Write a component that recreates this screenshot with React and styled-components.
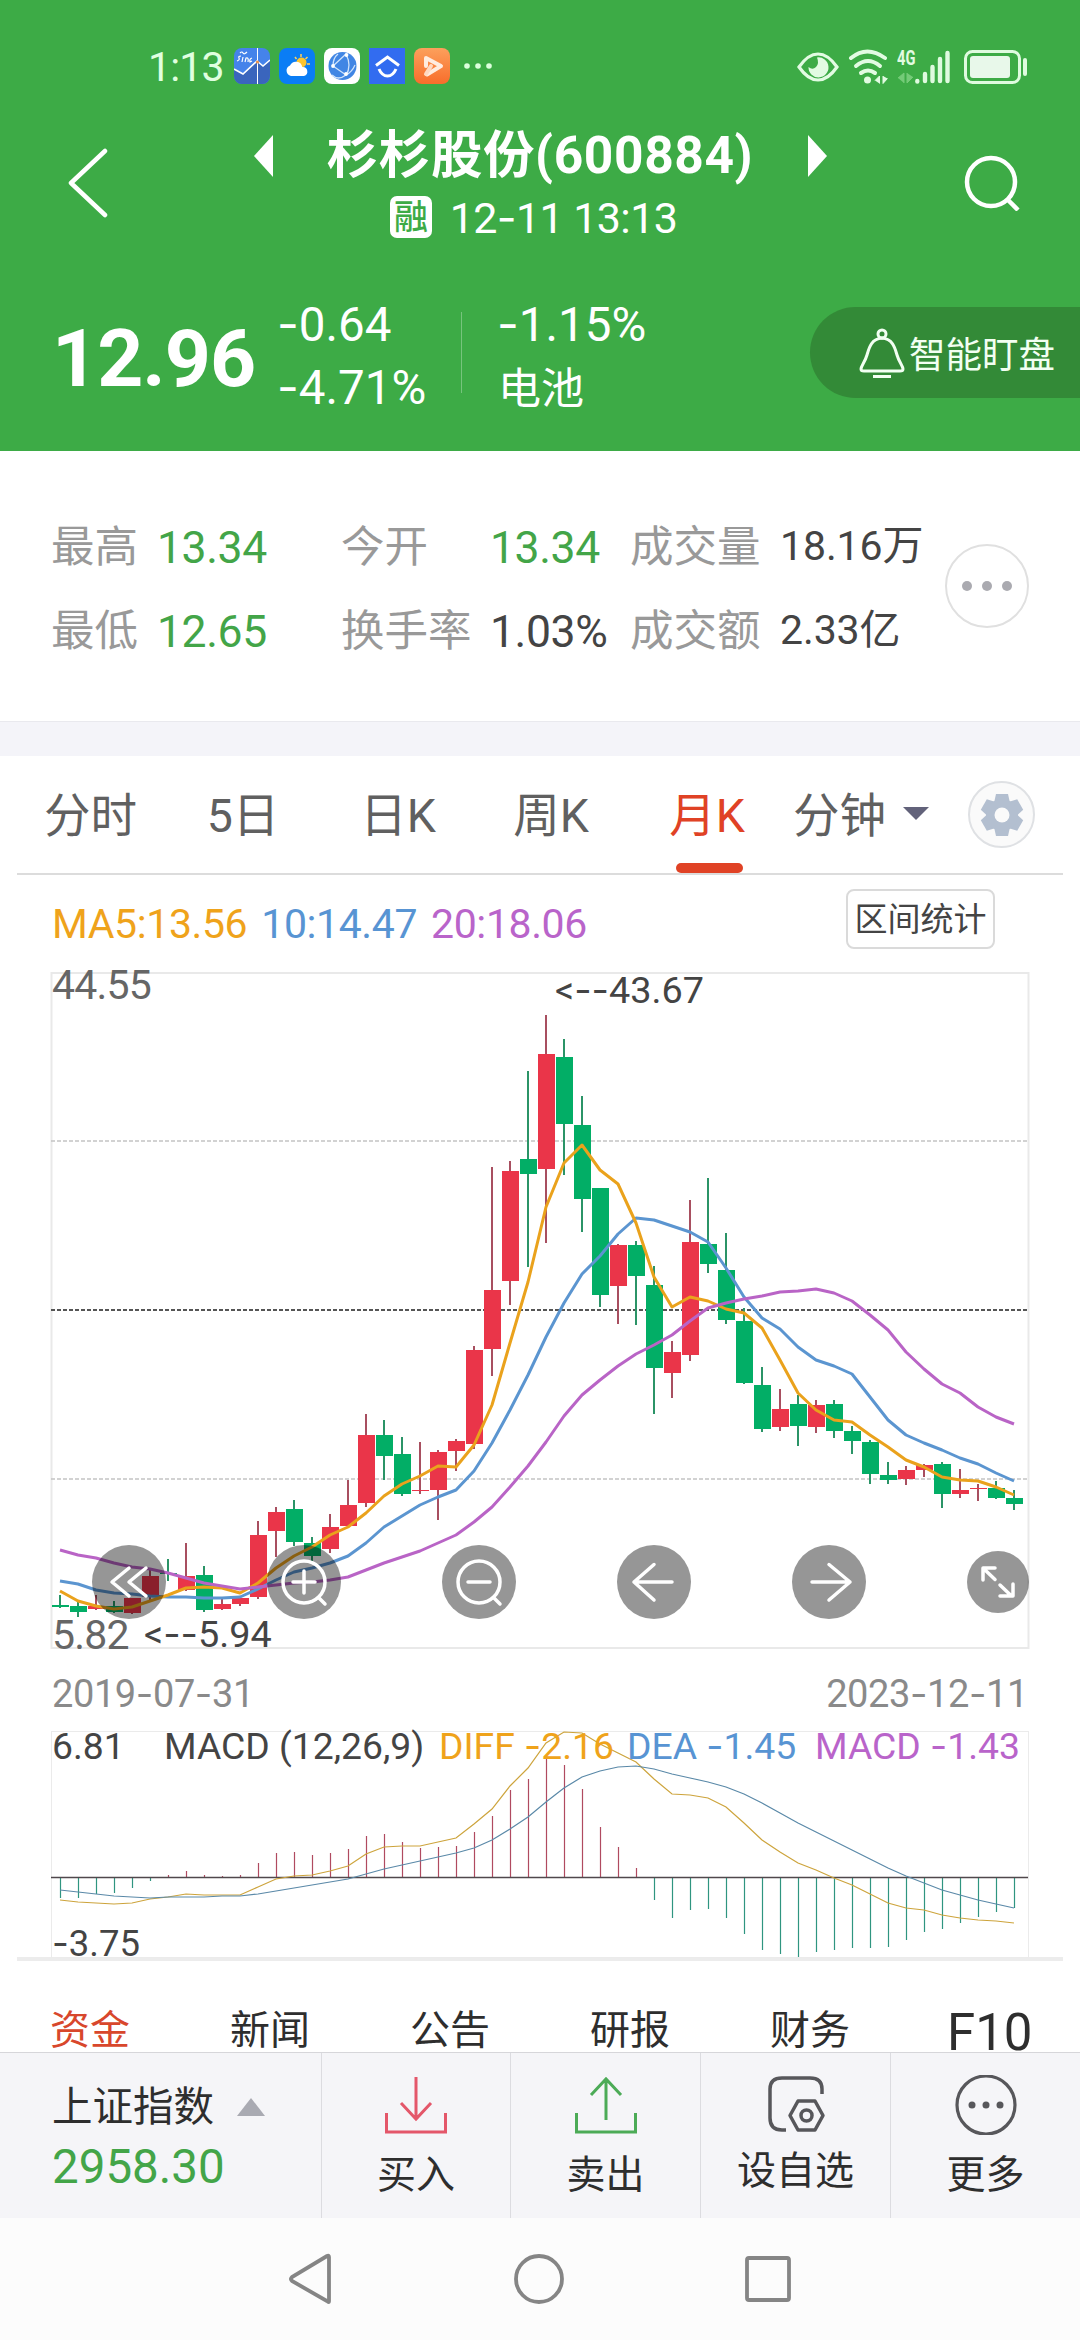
import React from 'react';

// Style
import styled, { createGlobalStyle, ThemeProvider } from 'styled-components';

const theme = {
    green: '#3dab46',
    textGreen: '#43a548',
    up: '#ea3549',
    upWick: '#a84f60',
    down: '#02ae66',
    downWick: '#2b9467',
    red: '#e04225',
    orange: '#efa31b',
    blue: '#5894d3',
    purple: '#b964ca',
    grey: '#999',
    dark: '#444',
    band: '#f4f4f9',
};

const GlobalStyle = createGlobalStyle`
    body {
        margin: 0;
        background: #fff;
        font-family: Roboto, 'Noto Sans CJK SC', sans-serif;
        -webkit-font-smoothing: antialiased;
    }
    svg {
        display: block;
    }
`;

// DATA
const stats = [
    { label: '最高', value: '13.34', tone: 'textGreen' },
    { label: '今开', value: '13.34', tone: 'textGreen' },
    { label: '成交量', value: '18.16万', small: true },
    { label: '最低', value: '12.65', tone: 'textGreen' },
    { label: '换手率', value: '1.03%' },
    { label: '成交额', value: '2.33亿', small: true },
];

const periods = ['分时', '5日', '日K', '周K', '月K'];
const infoTabs = ['资金', '新闻', '公告', '研报', '财务'];

// [rising, high, low, body top, body bottom], all in chart pixels
const candles = [
    [0, 622, 635, 632, 634], [0, 629, 644, 633, 639], [1, 622, 637, 633, 636], [0, 628, 640, 633, 639],
    [1, 625, 641, 625, 640], [1, 597, 627, 603, 624], [0, 586, 608, 600, 601], [1, 570, 618, 603, 617],
    [0, 593, 639, 602, 637], [1, 625, 637, 631, 636], [1, 625, 633, 625, 631], [1, 548, 626, 562, 624],
    [1, 534, 584, 539, 558], [0, 527, 573, 536, 569], [0, 564, 590, 570, 583], [1, 541, 580, 554, 576],
    [1, 507, 553, 532, 553], [1, 441, 534, 462, 530], [0, 447, 507, 462, 483], [0, 464, 523, 481, 521],
    [1, 469, 521, 517, 518], [1, 477, 547, 479, 517], [1, 466, 498, 468, 478], [1, 373, 476, 377, 471],
    [1, 194, 403, 317, 376], [1, 188, 332, 198, 308], [0, 98, 294, 186, 201], [1, 42, 270, 81, 196],
    [0, 66, 202, 84, 151], [0, 123, 259, 152, 226], [0, 215, 334, 215, 322], [1, 271, 351, 272, 313],
    [0, 268, 352, 272, 303], [0, 293, 441, 312, 395], [1, 368, 425, 379, 400], [1, 227, 388, 269, 382],
    [0, 205, 300, 271, 291], [0, 260, 351, 297, 347], [0, 335, 411, 348, 410], [0, 394, 459, 412, 456],
    [1, 416, 458, 436, 454], [0, 422, 473, 431, 453], [1, 427, 460, 432, 454], [0, 427, 465, 431, 458],
    [0, 453, 481, 458, 468], [0, 467, 511, 469, 501], [0, 489, 511, 502, 507], [1, 493, 512, 497, 506],
    [1, 491, 504, 492, 497], [0, 489, 535, 491, 521], [1, 496, 525, 517, 521], [1, 511, 528, 515, 516],
    [0, 508, 526, 515, 525], [0, 517, 537, 525, 531],
];

const ma5 = [618, 628, 633, 636, 634, 628, 622, 615, 614, 615, 620, 610, 595, 583, 574, 562, 554, 540, 523, 511, 503, 493, 494, 472, 432, 370, 309, 234, 190, 172, 197, 211, 250, 304, 334, 324, 328, 336, 340, 355, 387, 420, 437, 447, 449, 462, 474, 487, 494, 504, 507, 508, 514, 522];
const ma10 = [608, 611, 617, 620, 621, 623, 624, 624, 625, 625, 624, 616, 607, 599, 595, 590, 583, 570, 554, 543, 532, 524, 517, 498, 470, 437, 402, 364, 330, 301, 283, 261, 245, 247, 253, 259, 269, 295, 324, 345, 356, 374, 387, 393, 401, 424, 447, 462, 470, 477, 485, 491, 500, 508];
const ma20 = [577, 582, 585, 590, 594, 596, 600, 605, 610, 613, 616, 614, 612, 610, 609, 607, 604, 597, 590, 584, 578, 570, 562, 549, 534, 514, 493, 469, 443, 422, 407, 393, 381, 372, 362, 348, 335, 330, 326, 323, 319, 318, 316, 320, 328, 342, 357, 379, 396, 411, 420, 434, 444, 451];

const macdZero = 146;
const macdBars = [167, 167, 163, 162, 157, 150, 144, 140, 144, 145, 144, 132, 122, 121, 124, 122, 118, 105, 103, 111, 117, 116, 115, 101, 85, 59, 48, 26, 34, 58, 96, 116, 137, 169, 187, 179, 178, 187, 203, 219, 223, 226, 221, 219, 217, 217, 216, 209, 201, 198, 192, 186, 181, 177];
const diff = [169, 171, 172, 173, 172, 168, 166, 163, 164, 164, 164, 156, 148, 145, 144, 140, 135, 123, 116, 115, 115, 111, 107, 93, 78, 55, 37, 12, 1, 2, 13, 22, 31, 48, 63, 64, 67, 76, 92, 109, 121, 132, 139, 147, 154, 163, 172, 177, 179, 184, 187, 189, 190, 192];
const dea = [159, 161, 163, 165, 166, 167, 166, 166, 166, 165, 165, 163, 160, 157, 154, 151, 148, 143, 138, 134, 130, 126, 122, 117, 109, 98, 86, 71, 57, 46, 40, 36, 35, 38, 43, 47, 51, 56, 63, 72, 82, 92, 101, 110, 119, 128, 137, 145, 152, 159, 164, 169, 173, 177];

// Chart starts at x = 51, every period takes 18px
const xAt = (i) => 9 + i * 18;
const toPoints = (values) => values.map((y, i) => `${xAt(i)},${y}`).join(' ');

// Roboto has a short hyphen, the wide one comes from Inter
const Num = ({ children }) => children.split(/(-)/).map((part, i) => (
    part === '-' ? <Dash key={i}>-</Dash> : part
));

// COMPONENTS
const StatusBar = () => (
    <StatusRow>
        <Clock>1:13</Clock>
        <AppIcons>
            <svg width="36" height="36" viewBox="0 0 36 36">
                <rect width="36" height="36" rx="8" fill="#4583ea" />
                <path d="M0 20l9 6 14-13 6 5 7-6v16a8 8 0 0 1-8 8H8a8 8 0 0 1-8-8z" fill="#3a65bd" />
                <path d="M0 21l9 5 14-13 6 5 7-6" fill="none" stroke="#fff" strokeWidth="1.6" />
                <path d="M23.500 0v36" stroke="#fff" strokeWidth="1" />
                <circle cx="23.500" cy="14" r="1.600" fill="#e8904a" />
                <path d="M6 5q2-2 3 0t4-1M7 8q-3 0-2 2t-2 3M9 9l-1 5M11 14l1-4q3-1 2 4M18 10q-3 1-2 4l2-1" fill="none" stroke="#fff" strokeWidth="1.2" />
            </svg>
            <svg width="36" height="36" viewBox="0 0 36 36">
                <rect width="36" height="36" rx="8" fill="#0a7df5" />
                <path d="M22 6v3M28.500 9l-2 2M31 16h-3M16 9l1.500 2" stroke="#ffd05a" strokeWidth="1.500" />
                <circle cx="22.500" cy="14.500" r="5" fill="#fdc52e" />
                <path d="M12 28a5.500 5.500 0 0 1-1-10.500 6.500 6.500 0 0 1 12.300 1.500A4.600 4.600 0 0 1 25 28z" fill="#fff" />
            </svg>
            <svg width="36" height="36" viewBox="0 0 36 36">
                <rect width="36" height="36" rx="8" fill="#fff" />
                <circle cx="18.500" cy="18" r="14" fill="#4186e4" />
                <path d="M9 18L22 6M9 18l13 9M22 6q6 12 0 21M9 18q0-8 5-12M22 27q-8 6-14 0M22 27q6-3 9-10" fill="none" stroke="#cfe3fb" strokeWidth="1.300" />
                <circle cx="9" cy="18" r="1.900" fill="#fff" />
                <circle cx="22.500" cy="7" r="1.900" fill="#fff" />
                <circle cx="22" cy="26" r="1.900" fill="#fff" />
            </svg>
            <svg width="36" height="36" viewBox="0 0 36 36">
                <rect width="36" height="36" fill="#326cf0" />
                <path d="M7 17.500l11.500-8.500L30 17.500" fill="none" stroke="#fff" strokeWidth="3" />
                <path d="M10 21q3 7 8.500 7t8.500-7" fill="none" stroke="#fff" strokeWidth="3" />
            </svg>
            <svg width="36" height="36" viewBox="0 0 36 36">
                <defs>
                    <linearGradient id="play" x1="0" y1="0" x2="0" y2="1">
                        <stop offset="0" stopColor="#fca05c" />
                        <stop offset="1" stopColor="#f86d2b" />
                    </linearGradient>
                </defs>
                <rect width="36" height="36" rx="8" fill="url(#play)" />
                <path d="M12 18v-8l15 8-14 8.500" fill="none" stroke="#ffece0" strokeWidth="4" strokeLinejoin="round" strokeLinecap="round" />
                <path d="M12 26l5-8" stroke="#ffd9c2" strokeWidth="4" strokeLinecap="round" />
            </svg>
            <svg width="28" height="36" viewBox="0 0 28 36" fill="#dcffdc">
                <circle cx="3" cy="18" r="2.800" />
                <circle cx="14" cy="18" r="2.800" />
                <circle cx="25" cy="18" r="2.800" />
            </svg>
        </AppIcons>
        <SystemIcons>
            <svg width="42" height="30" viewBox="0 0 42 30">
                <path d="M2 15Q11 2 21 2t19 13Q31 28 21 28T2 15z" fill="none" stroke="#e2fbe2" strokeWidth="3.200" />
                <path d="M20 5.500a10 10 0 1 1-8.500 9.500q4 3.500 7.500 0t1-9.500z" fill="#e2fbe2" />
            </svg>
            <Wifi width="42" height="36" viewBox="0 0 42 36">
                <g fill="none" stroke="#e2fbe2" strokeWidth="4" strokeLinecap="round">
                    <path d="M3 9q16-13 34 0" />
                    <path d="M8 17q12-10 24 0" />
                    <path d="M13 24q7-5 14 0" />
                </g>
                <circle cx="19.500" cy="31" r="3.500" fill="#e2fbe2" />
                <path d="M27 31.500l4.500-4.500v7.500M35 27v7.500l4.500-5" fill="#e2fbe2" stroke="#e2fbe2" />
            </Wifi>
            <Network>
                <NetworkLabel>4G</NetworkLabel>
                <svg width="18" height="12" viewBox="0 0 18 12">
                    <path d="M1 6l6-5v10M10 1v10l6-6" fill="#75cb78" stroke="#75cb78" />
                </svg>
            </Network>
            <Signal width="36" height="34" viewBox="0 0 36 34">
                <path d="M2.300 31v.5M10 24v7M17.500 17v14M25 9v22M32.500 3v28" stroke="#dffadf" strokeWidth="4.400" strokeLinecap="round" />
            </Signal>
            <svg width="64" height="34" viewBox="0 0 64 34">
                <rect x="1.500" y="1.500" width="54" height="31" rx="7" fill="none" stroke="#dffbdf" strokeWidth="3" />
                <rect x="6" y="6" width="40" height="22" rx="3" fill="#e8f8ea" />
                <rect x="59" y="8" width="4" height="18" rx="2" fill="#dffbdf" />
            </svg>
        </SystemIcons>
    </StatusRow>
);

const KChart = () => (
    <KCanvas width="978" height="676" viewBox="0 0 978 676">
        <rect x="0.5" y="0" width="977" height="675" fill="none" stroke="#e9e9e9" strokeWidth="2" />
        <path d="M0 168H977M0 506H977" stroke="#c4c4c4" strokeWidth="1.600" strokeDasharray="4 2" />
        <path d="M0 337H977" stroke="#555" strokeWidth="2" strokeDasharray="4 2" />
        {candles.map(([rising, high, low, top, bottom], i) => (
            <g key={i} shapeRendering="crispEdges">
                <rect x={xAt(i) - 1} y={high} width="2" height={low - high} fill={rising ? theme.upWick : theme.downWick} />
                <rect x={xAt(i) - 8} y={top} width="17" height={bottom - top} fill={rising ? theme.up : theme.down} />
            </g>
        ))}
        <g fill="none" strokeWidth="3" strokeLinejoin="round">
            <polyline points={toPoints(ma10)} stroke="#5b95d0" />
            <polyline points={toPoints(ma5)} stroke="#eaa21c" />
            <polyline points={toPoints(ma20)} stroke="#b964c6" />
        </g>
    </KCanvas>
);

const MacdChart = () => (
    <MacdCanvas width="978" height="228" viewBox="0 0 978 228">
        <rect x="0.5" y="0.5" width="977" height="226" fill="none" stroke="#ebebeb" />
        {macdBars.map((y, i) => (
            <path key={i} d={`M${xAt(i) + 0.5} ${macdZero}V${y}`} stroke={y < macdZero ? '#b04a60' : '#2f9580'} strokeWidth="1.200" />
        ))}
        <path d="M0 146.500H977" stroke="#50484c" strokeWidth="1.600" />
        <polyline points={toPoints(diff)} fill="none" stroke="#cda43c" strokeWidth="1.200" />
        <polyline points={toPoints(dea)} fill="none" stroke="#5a89a8" strokeWidth="1.200" />
    </MacdCanvas>
);

const ChartControls = () => (
    <Controls>
        <RoundButton>
            <svg width="74" height="74" viewBox="0 0 74 74"><path d="M37 23L20 37l17 14M54 23L37 37l17 14" /></svg>
        </RoundButton>
        <RoundButton>
            <svg width="74" height="74" viewBox="0 0 74 74"><circle cx="37" cy="37" r="21" /><path d="M26 37h22M37 26v22M52 53l6 6" /></svg>
        </RoundButton>
        <RoundButton>
            <svg width="74" height="74" viewBox="0 0 74 74"><circle cx="37" cy="37" r="21" /><path d="M26 37h22M52 53l6 6" /></svg>
        </RoundButton>
        <RoundButton>
            <svg width="74" height="74" viewBox="0 0 74 74"><path d="M55 37H17M37 19.500L17 37l20 18" /></svg>
        </RoundButton>
        <RoundButton>
            <svg width="74" height="74" viewBox="0 0 74 74"><path d="M20 37h38M37 19.500L58 37 37 55" /></svg>
        </RoundButton>
        <RoundButton $small>
            <svg width="62" height="62" viewBox="0 0 62 62"><path d="M16 29V17h12M17 18l11 10.500M33 34l11 10.500M46 33v12H33" /></svg>
        </RoundButton>
    </Controls>
);

const BottomBar = () => (
    <Toolbar>
        <IndexCell>
            <IndexName>
                上证指数
                <svg width="28" height="18" viewBox="0 0 28 18"><path d="M14 0l14 18H0z" fill="#a9aab2" /></svg>
            </IndexName>
            <IndexValue>2958.30</IndexValue>
        </IndexCell>
        <Action>
            <svg width="64" height="60" viewBox="0 0 64 60" fill="none" stroke="#e4576a" strokeWidth="3">
                <path d="M32 2v42M17 28l15 16 15-16M2.500 38v19h59V38" />
            </svg>
            <span>买入</span>
        </Action>
        <Action>
            <svg width="64" height="60" viewBox="0 0 64 60" fill="none" stroke="#4cab57" strokeWidth="3">
                <path d="M32 45V4M17 20L32 4l15 16M2.500 38v19h59V38" />
            </svg>
            <span>卖出</span>
        </Action>
        <Action $raise>
            <svg width="64" height="60" viewBox="0 0 64 60" fill="none" stroke="#57575b" strokeWidth="3.500" strokeLinejoin="round">
                <path d="M22 55h-4q-12 0-12-12V14Q6 3 18 3h28q12 0 12 11v5" />
                <path d="M34 26h17l8 14.500-8 14.500H34l-8-14.500z" />
                <circle cx="42.500" cy="40.500" r="5.500" />
            </svg>
            <span>设自选</span>
        </Action>
        <Action>
            <svg width="64" height="60" viewBox="0 0 64 60" fill="#57575b">
                <circle cx="32" cy="30" r="29" fill="none" stroke="#57575b" strokeWidth="3.200" />
                <circle cx="18" cy="30" r="3.500" />
                <circle cx="32" cy="30" r="3.500" />
                <circle cx="46" cy="30" r="3.500" />
            </svg>
            <span>更多</span>
        </Action>
    </Toolbar>
);

export default function App() {
    return (
        <ThemeProvider theme={theme}>
            <GlobalStyle />
            <Screen>
                <Header>
                    <StatusBar />
                    <TitleBar>
                        <svg width="42" height="70" viewBox="0 0 42 70"><path d="M38 3L4 35l34 32" fill="none" stroke="#fff" strokeWidth="4.500" strokeLinecap="round" strokeLinejoin="round" /></svg>
                        <TitleBlock>
                            <TitleRow>
                                <svg width="19" height="42" viewBox="0 0 19 42"><path d="M19 0v42L0 21z" fill="#fff" /></svg>
                                <Title>杉杉股份(600884)</Title>
                                <svg width="19" height="42" viewBox="0 0 19 42"><path d="M0 0v42l19-21z" fill="#fff" /></svg>
                            </TitleRow>
                            <TimeRow>
                                <MarginBadge>融</MarginBadge>
                                <span><Num>12-11 13:13</Num></span>
                            </TimeRow>
                        </TitleBlock>
                        <svg width="56" height="56" viewBox="0 0 56 56" fill="none" stroke="#fff" strokeWidth="4.500">
                            <circle cx="27" cy="27" r="24" />
                            <path d="M43 44l11 11" />
                        </svg>
                    </TitleBar>
                    <QuoteRow>
                        <Price>12.96</Price>
                        <QuoteColumn>
                            <span><Num>-0.64</Num></span>
                            <span><Num>-4.71%</Num></span>
                        </QuoteColumn>
                        <QuoteDivider />
                        <QuoteColumn>
                            <span><Num>-1.15%</Num></span>
                            <Sector>电池</Sector>
                        </QuoteColumn>
                        <WatchButton>
                            <svg width="46" height="50" viewBox="0 0 46 50" fill="none" stroke="#f2fff2" strokeWidth="3">
                                <circle cx="23" cy="6" r="4" />
                                <path d="M23 10C12 11 10 20 8 27 6 34 2 38 2 41q0 2 3 2h36q3 0 3-2c0-3-4-7-6-14C36 20 34 11 23 10z" />
                                <path d="M14 48.500h18" />
                            </svg>
                            智能盯盘
                        </WatchButton>
                    </QuoteRow>
                </Header>

                <StatsPanel>
                    <StatsGrid>
                        {stats.map(({ label, value, tone, small }) => (
                            <React.Fragment key={label}>
                                <StatLabel>{label}</StatLabel>
                                <StatValue $tone={tone} $small={small}>{value}</StatValue>
                            </React.Fragment>
                        ))}
                    </StatsGrid>
                    <MoreButton>
                        <svg width="52" height="12" viewBox="0 0 52 12" fill="#aaaab0">
                            <circle cx="6" cy="6" r="5" />
                            <circle cx="26" cy="6" r="5" />
                            <circle cx="46" cy="6" r="5" />
                        </svg>
                    </MoreButton>
                </StatsPanel>
                <Band />

                <PeriodTabs>
                    {periods.map((name) => (
                        <PeriodTab key={name} $active={name === '月K'}>{name}</PeriodTab>
                    ))}
                    <MinuteTab>
                        分钟
                        <svg width="26" height="13" viewBox="0 0 26 13"><path d="M0 0h26L13 13z" fill="#62627a" /></svg>
                    </MinuteTab>
                    <SettingsButton>
                        <svg width="44" height="44" viewBox="-22 -22 44 44" fill="#b3bfd0">
                            <g>
                                {[0, 60, 120].map((angle) => (
                                    <path key={angle} d="M-6-21H6L8-12V12L6 21H-6L-8 12V-12z" transform={`rotate(${angle})`} />
                                ))}
                                <circle r="16" />
                            </g>
                            <circle r="7.500" fill="#fafafa" />
                        </svg>
                    </SettingsButton>
                </PeriodTabs>

                <MaRow>
                    <MaValue $tone="orange">MA5:13.56</MaValue>
                    <MaValue $tone="blue">10:14.47</MaValue>
                    <MaValue $tone="purple">20:18.06</MaValue>
                    <RangeButton>区间统计</RangeButton>
                </MaRow>

                <ChartArea>
                    <KChart />
                    <AxisLabel $left={1} $top={-12}>44.55</AxisLabel>
                    <AxisLabel $left={1} $top={638}>5.82</AxisLabel>
                    <PriceMark $left={504} $top={-7}>{'<'}<Num>--43.67</Num></PriceMark>
                    <PriceMark $left={93} $top={637}>{'<'}<Num>--5.94</Num></PriceMark>
                    <ChartControls />
                </ChartArea>
                <DateRow>
                    <span><Num>2019-07-31</Num></span>
                    <span><Num>2023-12-11</Num></span>
                </DateRow>

                <MacdArea>
                    <MacdChart />
                    <MacdLegend>
                        <span>6.81</span>
                        <span>MACD (12,26,9)</span>
                        <MacdValue $tone="orange"><Num>DIFF -2.16</Num></MacdValue>
                        <MacdValue $tone="blue"><Num>DEA -1.45</Num></MacdValue>
                        <MacdValue $tone="purple"><Num>MACD -1.43</Num></MacdValue>
                    </MacdLegend>
                    <MacdLow><Num>-3.75</Num></MacdLow>
                </MacdArea>
                <SectionRule />

                <InfoTabs>
                    {infoTabs.map((name) => (
                        <InfoTab key={name} $active={name === '资金'}>{name}</InfoTab>
                    ))}
                    <InfoTab $latin>F10</InfoTab>
                </InfoTabs>
                <BottomBar />

                <NavBar>
                    <svg width="44" height="52" viewBox="0 0 44 52"><path d="M40 4v44q0 2-2 0L3 28q-2-2 0-4L38 3q2-1 2 1z" /></svg>
                    <svg width="52" height="52" viewBox="0 0 52 52"><circle cx="26" cy="26" r="23" /></svg>
                    <svg width="46" height="46" viewBox="0 0 46 46"><rect x="2" y="2" width="42" height="42" rx="2" /></svg>
                </NavBar>
            </Screen>
        </ThemeProvider>
    );
}

const Screen = styled.div`
    width: 1080px;
    height: 2340px;
    display: flex;
    flex-direction: column;
    background: #fff;
    color: ${props => props.theme.dark};
    white-space: nowrap;
`;

const Dash = styled.span`
    font-family: Inter, sans-serif;
`;

const Header = styled.header`
    height: 451px;
    flex: none;
    background: ${props => props.theme.green};
    color: #fff;
`;

const StatusRow = styled.div`
    height: 100px;
    box-sizing: border-box;
    padding: 48px 52px 0 148px;
    display: flex;
    align-items: flex-start;
`;

const Clock = styled.span`
    width: 86px;
    font-size: 41px;
    line-height: 39px;
    color: #e0ffe0;
    letter-spacing: -0.8px;
`;

const AppIcons = styled.div`
    display: flex;
    gap: 9px;

    svg:last-child {
        margin-left: 5px;
    }
`;

const SystemIcons = styled.div`
    margin-left: auto;
    display: flex;
    align-items: center;
    height: 38px;
`;

const Wifi = styled.svg`
    margin-left: 9px;
`;

const Network = styled.div`
    margin-left: 7px;
    width: 18px;
    display: flex;
    flex-direction: column;
    gap: 5px;
`;

const NetworkLabel = styled.span`
    width: 26px;
    font-size: 21px;
    line-height: 17px;
    font-weight: 700;
    transform: scaleX(0.7);
    transform-origin: left center;
    color: #e2fbe2;
`;

const Signal = styled.svg`
    margin-right: 13px;
`;

const TitleBar = styled.div`
    height: 160px;
    box-sizing: border-box;
    padding: 21px 60px 0 67px;
    display: flex;
    justify-content: space-between;

    > svg {
        margin-top: 27px;
    }

    > svg:last-child {
        margin-top: 34px;
    }
`;

const TitleBlock = styled.div`
    display: flex;
    flex-direction: column;
    align-items: center;
    margin-left: 7px;
`;

const TitleRow = styled.div`
    display: flex;
    align-items: center;
    gap: 52px;
    height: 70px;
`;

const Title = styled.h1`
    margin: 0;
    font-size: 51.500px;
    line-height: 72px;
    font-weight: 700;
    width: 431px;
    text-align: center;
    letter-spacing: 0.6px;
`;

const TimeRow = styled.div`
    display: flex;
    align-items: center;
    gap: 18px;
    height: 52px;
    margin-left: -13px;
    font-size: 43px;
    line-height: 54px;
    letter-spacing: -0.6px;
`;

const MarginBadge = styled.span`
    width: 42px;
    height: 42px;
    border-radius: 7px;
    background: #fff;
    color: ${props => props.theme.green};
    font-size: 34px;
    line-height: 42px;
    font-weight: 500;
    text-align: center;
`;

const QuoteRow = styled.div`
    height: 191px;
    display: flex;
    box-sizing: border-box;
    padding: 33px 0 0 52px;
`;

const Price = styled.span`
    width: 225px;
    font-size: 80.500px;
    line-height: 128px;
    font-weight: 700;
    letter-spacing: -1px;
    padding-top: 2px;
`;

const QuoteColumn = styled.div`
    display: flex;
    flex-direction: column;
    font-size: 47.500px;
    line-height: 62px;
    width: 184px;
`;

const QuoteDivider = styled.i`
    width: 1px;
    height: 81px;
    margin: 19px 35px 0 0;
    background: rgba(255, 255, 255, 0.3);
`;

const Sector = styled.span`
    font-size: 43px;
    line-height: 66px;
    padding-left: 1px;
`;

const WatchButton = styled.div`
    margin: 14px 0 0 auto;
    width: 270px;
    height: 91px;
    box-sizing: border-box;
    padding-left: 49px;
    border-radius: 46px 0 0 46px;
    background: #338a37;
    display: flex;
    align-items: center;
    gap: 4px;
    font-size: 36.500px;
    color: #f2fff2;
`;

const StatsPanel = styled.section`
    height: 270px;
    flex: none;
    display: flex;
    box-sizing: border-box;
    padding: 54px 51px 0 51px;
`;

const StatsGrid = styled.div`
    flex: 1;
    display: grid;
    grid-template-columns: 106px 184px 149px 140px 150px 1fr;
    grid-template-rows: 84px 84px;
    align-items: center;
`;

const StatLabel = styled.span`
    font-size: 43.500px;
    line-height: 86px;
    color: ${props => props.theme.grey};
    height: 84px;
`;

const StatValue = styled.span`
    height: 84px;
    font-size: ${props => props.$small ? '41px' : '44.500px'};
    line-height: ${props => props.$small ? '83px' : '86px'};
    color: ${props => props.theme[props.$tone || 'dark']};
    letter-spacing: ${props => props.$small ? '-0.1px' : '-0.4px'};
`;

const MoreButton = styled.div`
    width: 84px;
    height: 84px;
    box-sizing: border-box;
    margin-top: 39px;
    border: 2px solid #e0e0e0;
    border-radius: 50%;
    display: flex;
    align-items: center;
    justify-content: center;
`;

const Band = styled.div`
    height: 35px;
    flex: none;
    box-sizing: border-box;
    border-top: 1px solid #e9e9ee;
    background: ${props => props.theme.band};
`;

const PeriodTabs = styled.nav`
    height: 119px;
    flex: none;
    box-sizing: border-box;
    margin: 0 17px;
    border-bottom: 2px solid #dcdcdc;
    display: grid;
    grid-template-columns: 147px 158px 152px 154px 158px 183px 1fr;
    font-size: 46.500px;
    line-height: 113px;
    color: #606060;
`;

const PeriodTab = styled.span`
    position: relative;
    height: 117px;
    box-sizing: border-box;
    padding-top: 4px;
    text-align: center;
    color: ${props => props.$active ? props.theme.red : 'inherit'};

    &::after {
        content: '';
        display: ${props => props.$active ? 'block' : 'none'};
        position: absolute;
        left: 48px;
        bottom: 0;
        width: 67px;
        height: 10px;
        border-radius: 5px;
        background: ${props => props.theme.red};
    }
`;

const MinuteTab = styled.span`
    display: flex;
    align-items: center;
    gap: 17px;
    padding: 4px 0 0 7px;

    svg {
        margin-top: -6px;
    }
`;

const SettingsButton = styled.div`
    width: 67px;
    height: 67px;
    box-sizing: border-box;
    margin: 25px 0 0 -1px;
    border: 2px solid #dfe1e4;
    border-radius: 50%;
    background: #fafafa;
    display: flex;
    align-items: center;
    justify-content: center;
`;

const MaRow = styled.div`
    height: 98px;
    flex: none;
    box-sizing: border-box;
    padding: 14px 85px 0 52px;
    display: flex;
    gap: 14px;
`;

const MaValue = styled.span`
    font-size: 41px;
    line-height: 70px;
    letter-spacing: -0.4px;
    color: ${props => props.theme[props.$tone]};
`;

const RangeButton = styled.div`
    width: 149px;
    height: 60px;
    box-sizing: border-box;
    margin-left: auto;
    border: 2.500px solid #dadada;
    border-radius: 8px;
    font-size: 33px;
    line-height: 58px;
    text-align: center;
`;

const ChartArea = styled.div`
    position: relative;
    height: 675px;
    flex: none;
    margin: 0 51px;
`;

const KCanvas = styled.svg`
    overflow: visible;
`;

const AxisLabel = styled.span`
    position: absolute;
    left: ${props => props.$left}px;
    top: ${props => props.$top}px;
    font-size: 41px;
    line-height: 48px;
    letter-spacing: -0.8px;
    color: #666;
`;

const PriceMark = styled.span`
    position: absolute;
    left: ${props => props.$left}px;
    top: ${props => props.$top}px;
    font-size: 37.800px;
    line-height: 46px;
`;

const Controls = styled.div`
    position: absolute;
    left: 41px;
    right: -1px;
    top: 572px;
    display: flex;
    align-items: center;
    gap: 101px;
`;

const RoundButton = styled.div`
    flex: none;
    width: ${props => props.$small ? 62 : 74}px;
    height: ${props => props.$small ? 62 : 74}px;
    border-radius: 50%;
    background: rgba(0, 0, 0, 0.41);

    svg {
        fill: none;
        stroke: #fff;
        stroke-width: 3.5;
        stroke-linecap: round;
        stroke-linejoin: round;
    }
`;

const DateRow = styled.div`
    height: 83px;
    flex: none;
    box-sizing: border-box;
    padding: 15px 52px 0 52px;
    display: flex;
    justify-content: space-between;
    font-size: 38px;
    line-height: 60px;
    letter-spacing: -0.4px;
    color: #8a8a8a;
`;

const MacdArea = styled.div`
    position: relative;
    height: 226px;
    flex: none;
    margin: 0 51px;
`;

const MacdCanvas = styled.svg`
    overflow: visible;
`;

const MacdLegend = styled.div`
    position: absolute;
    left: 1px;
    top: -7px;
    display: grid;
    grid-template-columns: 112px 275px 188px 188px auto;
    font-size: 37.300px;
    line-height: 44px;
`;

const MacdValue = styled.span`
    color: ${props => props.theme[props.$tone]};
`;

const MacdLow = styled.span`
    position: absolute;
    left: 1px;
    bottom: -9px;
    font-size: 36.500px;
    line-height: 44px;
`;

const SectionRule = styled.div`
    height: 4px;
    flex: none;
    margin: 0 17px;
    background: #ececec;
`;

const InfoTabs = styled.nav`
    height: 91px;
    flex: none;
    box-sizing: border-box;
    padding: 39px 0 0 50px;
    display: grid;
    grid-template-columns: repeat(5, 180px) 1fr;
    color: #2e2e2e;
`;

const InfoTab = styled.span`
    height: 52px;
    font-size: ${props => props.$latin ? 51 : 40}px;
    line-height: ${props => props.$latin ? 66 : 62}px;
    color: ${props => props.$active ? '#d8472c' : 'inherit'};
    margin-left: ${props => props.$latin ? -3 : 0}px;
`;

const Toolbar = styled.footer`
    height: 166px;
    flex: none;
    box-sizing: border-box;
    border-top: 1px solid #d6d6da;
    background: #f5f5f8;
    display: grid;
    grid-template-columns: 321px 189px 190px 190px 190px;
    color: #2e2e2e;
`;

const IndexCell = styled.div`
    padding: 23px 0 0 52px;
`;

const IndexName = styled.div`
    display: flex;
    align-items: center;
    gap: 23px;
    font-size: 40.500px;
    line-height: 62px;
`;

const IndexValue = styled.div`
    font-size: 47.500px;
    line-height: 58px;
    color: ${props => props.theme.textGreen};
`;

const Action = styled.div`
    border-left: 1px solid #dcdce0;
    display: flex;
    flex-direction: column;
    align-items: center;
    padding-top: 22px;
    font-size: 39px;

    span {
        margin-top: ${props => props.$raise ? 5 : 9}px;
        line-height: 62px;
    }
`;

const NavBar = styled.div`
    flex: 1;
    background: #fcfcfc;
    display: flex;
    justify-content: center;
    align-items: center;
    gap: 180px;

    svg {
        fill: none;
        stroke: #858585;
        stroke-width: 3.8;
    }
`;
